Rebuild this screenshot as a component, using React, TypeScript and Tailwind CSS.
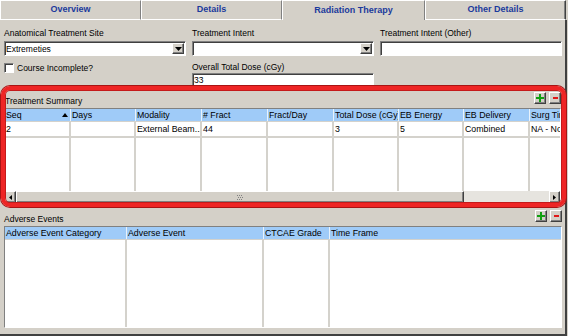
import React from "react";

const raised =
  "bg-[#d4d0c8] border border-t-white border-l-white border-r-[#404040] border-b-[#404040] shadow-[inset_-1px_-1px_0_#808080]";
const sunken =
  "bg-white border border-t-[#808080] border-l-[#808080] border-r-white border-b-white shadow-[inset_1px_1px_0_#404040]";

function Tab({ w, label, active, last }: { w: number; label: string; active?: boolean; last?: boolean }) {
  const base = active
    ? "border-t border-l border-r border-t-white border-l-white border-r-[#808080]"
    : last
    ? "border-t border-l border-r border-b border-t-white border-l-white border-r-[#404040] border-b-white shadow-[inset_-1px_0_0_#808080]"
    : "border-t border-l border-r border-b border-t-white border-l-white border-r-[#808080] border-b-white";
  return (
    <div
      className={`${base} h-[20px] bg-[#d4d0c8] flex items-center justify-center font-bold text-[9px] text-[#1b3a9c]`}
      style={{ width: w }}
    >
      {label}
    </div>
  );
}

function DropBtn() {
  return (
    <div className={`${raised} w-[12px] h-[11px] flex items-center justify-center`}>
      <svg width="7" height="4" viewBox="0 0 7 4">
        <polygon points="0,0 7,0 3.5,4" fill="#000" />
      </svg>
    </div>
  );
}

function Select({ value }: { value?: string }) {
  return (
    <div className={`${sunken} h-[15px] flex items-center pr-[1px]`}>
      <span className="pl-[1px] leading-[10px] flex-1">{value}</span>
      <DropBtn />
    </div>
  );
}

function PlusMinus() {
  return (
    <div className="flex gap-[3px]">
      <div className={`${raised} w-[12px] h-[12px] flex items-center justify-center`}>
        <svg width="8" height="8" viewBox="0 0 8 8">
          <rect x="3" y="0" width="2" height="8" fill="#10a010" />
          <rect x="0" y="3" width="8" height="2" fill="#10a010" />
        </svg>
      </div>
      <div className={`${raised} w-[12px] h-[12px] flex items-center justify-center`}>
        <svg width="5" height="2" viewBox="0 0 5 2">
          <rect x="0" y="0" width="5" height="2" fill="#e01818" />
        </svg>
      </div>
    </div>
  );
}

const tCols = [
  { w: 66, h: "Seq", v: "2", sort: true },
  { w: 65, h: "Days", v: "" },
  { w: 66, h: "Modality", v: "External Beam..." },
  { w: 66, h: "# Fract", v: "44" },
  { w: 66, h: "Fract/Day", v: "" },
  { w: 65, h: "Total Dose (cGy)", v: "3" },
  { w: 65, h: "EB Energy", v: "5" },
  { w: 66, h: "EB Delivery", v: "Combined" },
  { w: 60, h: "Surg Time", v: "NA - None" },
];

const aCols = [
  { w: 122, h: "Adverse Event Category" },
  { w: 137, h: "Adverse Event" },
  { w: 66, h: "CTCAE Grade" },
  { w: 240, h: "Time Frame" },
];

function HeaderCell({ w, text, sort }: { w: number; text: string; sort?: boolean }) {
  return (
    <div
      className="shrink-0 h-[12px] bg-[#9fcbf8] border-r border-r-[#e8f2fc] leading-[12px] pl-[1px] whitespace-nowrap overflow-hidden relative text-[8.8px]"
      style={{ width: w }}
    >
      {text}
      {sort && (
        <svg className="absolute left-[57px] top-[4px]" width="6" height="4" viewBox="0 0 6 4">
          <polygon points="0,4 6,4 3,0" fill="#000" />
        </svg>
      )}
    </div>
  );
}

function BodyCell({ w, text, h }: { w: number; text?: string; h?: string }) {
  return (
    <div
      className={`shrink-0 bg-white border-r-2 border-r-[#d4d2cc] leading-[14px] pl-[1px] whitespace-nowrap overflow-hidden text-[8.8px] ${h ?? ""}`}
      style={{ width: w }}
    >
      {text}
    </div>
  );
}

function Grip() {
  return (
    <svg width="6" height="5" viewBox="0 0 6 5">
      <rect x="0" y="0" width="1" height="1" fill="#808080" />
      <rect x="2" y="0" width="1" height="1" fill="#808080" />
      <rect x="4" y="0" width="1" height="1" fill="#808080" />
      <rect x="1" y="2" width="1" height="1" fill="#808080" />
      <rect x="3" y="2" width="1" height="1" fill="#808080" />
      <rect x="5" y="2" width="1" height="1" fill="#808080" />
      <rect x="0" y="4" width="1" height="1" fill="#808080" />
      <rect x="2" y="4" width="1" height="1" fill="#808080" />
      <rect x="4" y="4" width="1" height="1" fill="#808080" />
    </svg>
  );
}

export default function App() {
  return (
    <div className="w-[568px] h-[336px] bg-[#d4d0c8] font-['Liberation_Sans',Arial,sans-serif] text-[8.5px] text-black relative overflow-hidden flex flex-col">
      {/* Tabs */}
      <div className="flex h-[20px] shrink-0">
        <Tab w={141} label="Overview" />
        <Tab w={141} label="Details" />
        <Tab w={143} label="Radiation Therapy" active />
        <Tab w={141} label="Other Details" last />
      </div>

      {/* Panel */}
      <div className="w-[567px] flex-1 flex flex-col border-r-2 border-b-2 border-r-[#404040] border-b-[#404040]">
        {/* Form */}
        <div className="grid grid-cols-[182px_182px_182px] gap-x-[6px] pl-[4px] pt-[8px]">
          <div>
            <div className="h-[10px] leading-[10px] whitespace-nowrap">Anatomical Treatment Site</div>
            <div className="mt-[3px]">
              <Select value="Extremeties" />
            </div>
          </div>
          <div>
            <div className="h-[10px] leading-[10px] whitespace-nowrap">Treatment Intent</div>
            <div className="mt-[3px]">
              <Select />
            </div>
          </div>
          <div>
            <div className="h-[10px] leading-[10px] whitespace-nowrap">Treatment Intent (Other)</div>
            <div className={`${sunken} mt-[3px] h-[15px]`} />
          </div>

          <div className="flex items-center gap-[3px] mt-[7px] h-[10px] self-start">
            <div className={`${sunken} w-[10px] h-[10px] shrink-0`} />
            <span className="leading-[10px] whitespace-nowrap">Course Incomplete?</span>
          </div>
          <div>
            <div className="h-[10px] leading-[10px] whitespace-nowrap mt-[6px]">Overall Total Dose (cGy)</div>
            <div className={`${sunken} mt-[1px] h-[14px] flex items-center`}>
              <span className="pl-[1px] leading-[10px]">33</span>
            </div>
          </div>
          <div />
        </div>

        {/* Treatment Summary */}
        <div className="pl-[4px]">
          <div className="h-[21px] flex items-start w-[557px]">
            <div className="mt-[9px] h-[10px] leading-[10px] pl-[1px]">Treatment Summary</div>
            <div className="ml-auto mt-[5px]">
              <PlusMinus />
            </div>
          </div>
          <div className="w-[557px] h-[96px] border border-t-[#808080] border-l-[#808080] border-r-white border-b-white flex flex-col overflow-hidden">
            <div className="flex border-b border-b-[#d4d2cc]">
              {tCols.map((c, i) => (
                <HeaderCell key={i} w={c.w} text={c.h} sort={c.sort} />
              ))}
            </div>
            <div className="flex border-b-2 border-b-[#d4d2cc]">
              {tCols.map((c, i) => (
                <BodyCell key={i} w={c.w} text={c.v} h="h-[14px]" />
              ))}
            </div>
            <div className="flex flex-1">
              {tCols.map((c, i) => (
                <BodyCell key={i} w={c.w} h="h-full" />
              ))}
            </div>
            {/* Scrollbar */}
            <div className="h-[12px] shrink-0 flex bg-[#e6e4df]">
              <div className={`${raised} w-[11px] h-[12px] flex items-center justify-center`}>
                <svg width="3" height="5" viewBox="0 0 3 5">
                  <polygon points="3,0 3,5 0,2.5" fill="#000" />
                </svg>
              </div>
              <div className={`${raised} w-[448px] h-[12px] flex items-center justify-center`}>
                <Grip />
              </div>
              <div className="flex-1" />
              <div className={`${raised} w-[11px] h-[12px] flex items-center justify-center`}>
                <svg width="3" height="5" viewBox="0 0 3 5">
                  <polygon points="0,0 0,5 3,2.5" fill="#000" />
                </svg>
              </div>
            </div>
          </div>
        </div>

        {/* Adverse Events */}
        <div className="pl-[4px]">
          <div className="h-[22px] flex items-start w-[558px]">
            <div className="mt-[10px] h-[10px] leading-[10px]">Adverse Events</div>
            <div className="ml-auto mt-[6px]">
              <PlusMinus />
            </div>
          </div>
          <div className="w-[558px] h-[102px] border border-t-[#808080] border-l-[#808080] border-r-white border-b-white flex flex-col overflow-hidden">
            <div className="flex border-b border-b-[#d4d2cc]">
              {aCols.map((c, i) => (
                <HeaderCell key={i} w={c.w} text={c.h} />
              ))}
            </div>
            <div className="flex flex-1">
              {aCols.map((c, i) => (
                <BodyCell key={i} w={c.w} h="h-full" />
              ))}
            </div>
          </div>
        </div>
      </div>

      {/* Red highlight annotation */}
      <div className="absolute left-[1px] top-[86px] w-[565px] h-[121px] rounded-[9px] border-[4px] border-[#ee2525] shadow-[0_0_0_1px_#a81414,inset_0_0_0_1px_#c41a1a] pointer-events-none" />
    </div>
  );
}
